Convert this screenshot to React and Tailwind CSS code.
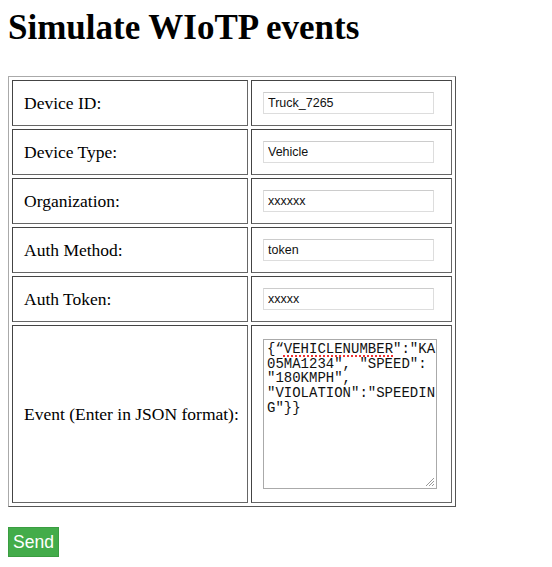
import React from 'react';

const fields = [
  { label: 'Device ID:', value: 'Truck_7265' },
  { label: 'Device Type:', value: 'Vehicle' },
  { label: 'Organization:', value: 'xxxxxx' },
  { label: 'Auth Method:', value: 'token' },
  { label: 'Auth Token:', value: 'xxxxx' },
];

const cell = 'border border-t-[#444] border-l-[#444] border-b-[#666] border-r-[#666] px-[11px] align-middle';

export default function App() {
  return (
    <div className="min-h-screen bg-white p-2 text-black leading-[normal]" style={{ fontFamily: '"Liberation Serif", "Times New Roman", serif' }}>
      <h1 className="text-[35px] font-bold leading-[normal] mb-[28px]">Simulate WIoTP events</h1>

      <table className="table-fixed w-[448px] border-separate border-spacing-[3px] border border-t-[#aaa] border-l-[#aaa] border-b-[#555] border-r-[#555]">
        <colgroup>
          <col className="w-[236px]" />
          <col />
        </colgroup>
        <tbody>
          {fields.map((f) => (
            <tr key={f.label}>
              <td className={`${cell} h-[46px] text-[17.5px]`}>{f.label}</td>
              <td className={`${cell} h-[46px]`}>
                <input
                  type="text"
                  defaultValue={f.value}
                  className="block w-[171px] h-[22px] border border-[#ddd] border-t-[#ccc] px-[4px] text-[12.5px] text-[#111] outline-none"
                  style={{ fontFamily: '"Liberation Sans", Arial, sans-serif' }}
                />
              </td>
            </tr>
          ))}
          <tr>
            <td className={`${cell} h-[178px] text-[17.5px] whitespace-nowrap`}>Event (Enter in JSON format):</td>
            <td className={`${cell} h-[178px]`}>
              {/* textarea look-alike, so the spellcheck underline can show */}
              <div className="relative w-[174px] h-[150px] border border-[#aaa] px-[3px] pt-[2px] text-[14px] leading-[14.7px] text-[#111]" style={{ fontFamily: '"Liberation Mono", "Courier New", monospace' }}>
                <div className="whitespace-pre">{'{\u201C'}<span className="underline decoration-dotted decoration-[#e33] decoration-2 underline-offset-[2px]">VEHICLENUMBER</span>{'":"KA'}</div>
                <div className="whitespace-pre">{'05MA1234", "SPEED":'}</div>
                <div className="whitespace-pre">{'"180KMPH",'}</div>
                <div className="whitespace-pre">{'"VIOLATION":"SPEEDIN'}</div>
                <div className="whitespace-pre">{'G"}}'}</div>
                <svg className="absolute right-[1px] bottom-[1px]" width="11" height="11" viewBox="0 0 11 11">
                  <path d="M10 2 L2 10 M10 5 L5 10 M10 8 L8 10" stroke="#999" strokeWidth="1" fill="none" />
                </svg>
              </div>
            </td>
          </tr>
        </tbody>
      </table>

      <button
        className="mt-[20px] h-[30px] px-[4px] bg-[#43ac4a] border border-[#3a9d41] text-white text-[17.5px]"
        style={{ fontFamily: '"Liberation Sans", Arial, sans-serif' }}
      >
        Send
      </button>
    </div>
  );
}
